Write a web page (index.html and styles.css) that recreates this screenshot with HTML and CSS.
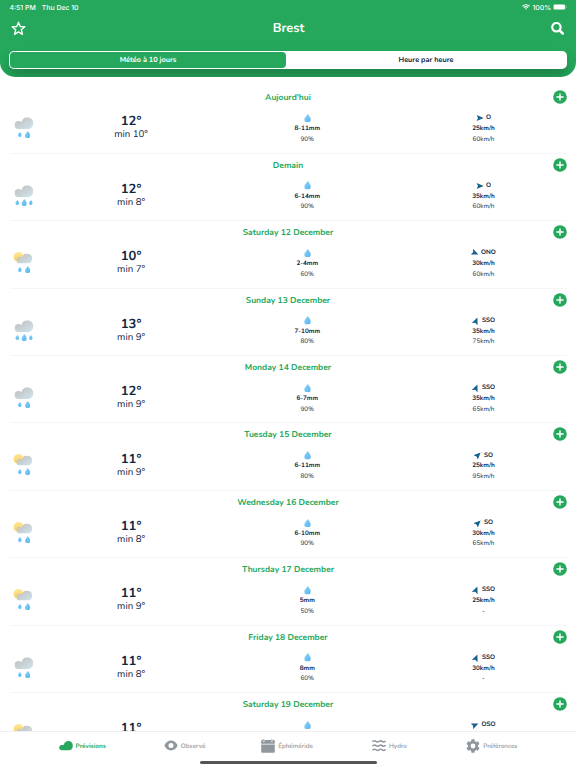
FILE: index.html
```html
<!DOCTYPE html>
<html lang="fr">
<head>
    <meta charset="UTF-8">
    <meta name="viewport" content="width=device-width, initial-scale=1.0">
    <title>Brest</title>
    <link rel="stylesheet" href="styles.css">
</head>
<body>
    <svg width="0" height="0" class="defs">
        <defs>
            <linearGradient id="cloudFill" x1="0" y1="0" x2="1" y2="1">
                <stop offset="0.3" stop-color="#c5c8c9"/>
                <stop offset="1" stop-color="#cfe6ef"/>
            </linearGradient>
            <linearGradient id="sunFill" x1="0" y1="0" x2="0" y2="1">
                <stop offset="0" stop-color="#fee69a"/>
                <stop offset="1" stop-color="#fbcf55"/>
            </linearGradient>
            <linearGradient id="dropFill" x1="0" y1="0" x2="1" y2="1">
                <stop offset="0.2" stop-color="#85cdf5"/>
                <stop offset="1" stop-color="#4fb5f0"/>
            </linearGradient>
            <symbol id="cloud" viewBox="0 0 19 12">
                <path d="M4.2 12A4.1 4.1 0 0 1 4.2 3.8C5.3 3.8 6.2 4.1 7 4.7A6 6 0 1 1 13 12Z" fill="url(#cloudFill)"/>
            </symbol>
            <symbol id="drop" viewBox="0 0 8 10">
                <path d="M4.4 0C5.4 1.7 7.7 3.9 7.7 6.3A3.7 3.7 0 0 1 .3 6.3C.3 3.9 3.2 2.2 4.4 0Z" fill="url(#dropFill)"/>
            </symbol>
            <symbol id="arrow" viewBox="-4 -4 8 8">
                <path d="M3.7 0L-3.4 3.1L-2 0L-3.4-3.1Z" fill="#14608f"/>
            </symbol>
        </defs>
    </svg>

    <header class="header">
        <div class="status">
            <div class="status-left"><span>4:51 PM</span><span>Thu Dec 10</span></div>
            <div class="status-right">
                <svg width="8" height="6" viewBox="0 0 16 12" fill="none" stroke="#fff" stroke-width="2.2">
                    <path d="M1 4.5A10 10 0 0 1 15 4.5M3.7 7.4A6.2 6.2 0 0 1 12.3 7.4"/>
                    <path d="M8 11.5L5.8 9.4A3.2 3.2 0 0 1 10.2 9.4Z" fill="#fff" stroke="none"/>
                </svg>
                <span>100%</span>
                <svg width="14" height="6" viewBox="0 0 14 6">
                    <rect x=".25" y=".25" width="12.2" height="5.5" rx="1.5" fill="#8fd4aa"/>
                    <rect x=".9" y=".8" width="10.9" height="4.4" rx="1" fill="#fff"/>
                    <path d="M13 2V4Q13.8 3.7 13.8 3T13 2Z" fill="#8fd4aa"/>
                </svg>
            </div>
        </div>
        <div class="navbar">
            <svg width="15" height="15" viewBox="0 0 14 14">
                <path d="M7 1.2L8.6 5.1L12.9 5.4L9.6 8.2L10.7 12.5L7 10.2L3.3 12.5L4.4 8.2L1.1 5.4L5.4 5.1Z" fill="none" stroke="#fff" stroke-width="1.25" stroke-linejoin="round"/>
            </svg>
            <h1 class="title">Brest</h1>
            <svg width="13" height="13" viewBox="0 0 13 13" fill="none" stroke="#fff">
                <circle cx="5.4" cy="5.2" r="4.2" stroke-width="2.2"/>
                <path d="M8.6 8.4L11.7 11.5" stroke-width="2.5" stroke-linecap="round"/>
            </svg>
        </div>
        <div class="segments">
            <div class="segment active">Météo à 10 jours</div>
            <div class="segment">Heure par heure</div>
        </div>
    </header>

    <main class="days" id="days"></main>

    <footer class="footer">
        <nav class="tabs">
            <a class="tab active">
                <svg width="14" height="14" viewBox="0 0 14 14"><path d="M3 11.3Q.2 11.3.2 8.6Q.3 6 3.3 6.1Q4.2 6.2 4.8 5.7C5.6 3.4 7.1 2.1 9.4 2.1C12.1 2.1 13.8 4 13.8 6.5Q13.8 11.3 9.5 11.3Z" fill="currentColor"/></svg>
                <span>Prévisions</span>
            </a>
            <a class="tab">
                <svg width="14" height="14" viewBox="0 0 14 14"><path fill-rule="evenodd" d="M.3 6.5C2 3.3 4.2 1.6 7 1.6S12 3.3 13.7 6.5C12 9.8 9.8 11.4 7 11.4S2 9.8.3 6.5ZM7 4A2.5 2.5 0 1 0 7 9A2.5 2.5 0 1 0 7 4Z" fill="currentColor"/></svg>
                <span>Observé</span>
            </a>
            <a class="tab">
                <svg width="14" height="14" viewBox="0 0 14 14" fill="currentColor"><path d="M.2 4.7V1.8Q.2 1.1 1 1.1H2V2.7H3.5V1.1H4L10 1.1V2.7H11.6V1.1H13Q13.8 1.1 13.8 1.8V4.7Z"/><path d="M.2 5.5H13.8V12.5Q13.8 13.7 12.6 13.7H1.4Q.2 13.7.2 12.5Z"/><path d="M2.3 0H3.2V2.2H2.3ZM10.4 0H11.3V2.2H10.4Z"/></svg>
                <span>Éphéméride</span>
            </a>
            <a class="tab">
                <svg width="14" height="14" viewBox="0 0 14 14" fill="none" stroke="currentColor" stroke-width="1.5" stroke-linecap="round"><path d="M.9 2.4Q2.6 1.2 4 2.4T7.2 2.4T10.2 2.4T13.1 2.4M.9 6.6Q2.6 5.4 4 6.6T7.2 6.6T10.2 6.6T13.1 6.6M.9 10.8Q2.6 9.6 4 10.8T7.2 10.8T10.2 10.8T13.1 10.8"/></svg>
                <span>Hydro</span>
            </a>
            <a class="tab">
                <svg width="14" height="14" viewBox="0 0 14 14"><path fill-rule="evenodd" d="M5.5.3H8.5L8.9 2.2L10.2 3L12 2.3L13.5 4.9L12 6.2V7.8L13.5 9.1L12 11.7L10.2 11L8.9 11.8L8.5 13.7H5.5L5.1 11.8L3.8 11L2 11.7L.5 9.1L2 7.8V6.2L.5 4.9L2 2.3L3.8 3L5.1 2.2ZM7 4.6A2.4 2.4 0 1 0 7 9.4A2.4 2.4 0 1 0 7 4.6Z" fill="currentColor"/></svg>
                <span>Préférences</span>
            </a>
        </nav>
        <div class="home-bar"></div>
    </footer>

    <script>
        // day, icon, max, min, rain, probability, wind direction, wind, gusts
        const days = [
            ["Aujourd'hui", 'rain', 12, 10, '8-11mm', 90, 'O', 25, '60km/h'],
            ['Demain', 'showers', 12, 8, '6-14mm', 90, 'O', 35, '60km/h'],
            ['Saturday 12 December', 'sun', 10, 7, '2-4mm', 60, 'ONO', 30, '60km/h'],
            ['Sunday 13 December', 'showers', 13, 9, '7-10mm', 80, 'SSO', 35, '75km/h'],
            ['Monday 14 December', 'rain', 12, 9, '6-7mm', 90, 'SSO', 35, '65km/h'],
            ['Tuesday 15 December', 'sun', 11, 9, '6-11mm', 80, 'SO', 25, '95km/h'],
            ['Wednesday 16 December', 'sun', 11, 8, '6-10mm', 90, 'SO', 30, '65km/h'],
            ['Thursday 17 December', 'sun', 11, 9, '5mm', 50, 'SSO', 25, '-'],
            ['Friday 18 December', 'rain', 11, 8, '8mm', 60, 'SSO', 30, '-']
        ];

        // last day only shows its first line above the tab bar
        const lastDay = ['Saturday 19 December', 'sun', 11, null, null, null, 'OSO', null, null];

        const angles = { O: 0, ONO: 22.5, OSO: -22.5, SO: -45, SSO: -67.5 };

        const small = x => `<use href="#drop" x="${x}" y="14.9" width="4" height="5"/>`;
        const large = x => `<use href="#drop" x="${x}" y="14" width="5.6" height="7"/>`;
        const bigCloud = '<use href="#cloud" x="0.5" y="0.2" width="19" height="12"/>';

        const icons = {
            rain: bigCloud + small(3.8) + large(10.8),
            showers: bigCloud + small(1.2) + large(7.3) + small(14.8),
            sun: '<circle cx="4.6" cy="5" r="5" fill="url(#sunFill)"/><use href="#cloud" x="2.4" y="1.6" width="15.8" height="10"/>' + small(3.8) + large(10.8)
        };

        const line = (tag, value, text) => value === null ? '' : `<${tag}>${text}</${tag}>`;

        document.getElementById('days').innerHTML = [...days, lastDay].map(d => `
            <section class="day">
                <div class="day-head">
                    <h2 class="day-name">${d[0]}</h2>
                    <svg class="plus" width="14" height="14" viewBox="0 0 14 14"><circle cx="7" cy="7" r="6.8" fill="#25a85b"/><path d="M7 3.9V10.1M3.9 7H10.1" stroke="#fff" stroke-width="1.4" stroke-linecap="round"/></svg>
                </div>
                <div class="day-body">
                    <svg class="weather" width="20" height="22" viewBox="0 0 20 22" overflow="visible">${icons[d[1]]}</svg>
                    <div class="col temp">
                        <strong>${d[2]}°</strong>
                        ${line('span', d[3], `min ${d[3]}°`)}
                    </div>
                    <div class="col">
                        <div class="top"><svg width="7" height="8.6"><use href="#drop"/></svg></div>
                        ${line('strong', d[4], d[4])}
                        ${line('span', d[5], `${d[5]}%`)}
                    </div>
                    <div class="col">
                        <div class="top"><svg width="8" height="8" viewBox="-4 -4 8 8"><g transform="rotate(${angles[d[6]]})"><use href="#arrow" x="-4" y="-4" width="8" height="8"/></g></svg><span class="dir">${d[6]}</span></div>
                        ${line('strong', d[7], `${d[7]}km/h`)}
                        ${line('span', d[8], d[8])}
                    </div>
                </div>
            </section>`).join('');
    </script>
</body>
</html>
```

FILE: styles.css
```css
* {
    margin: 0;
    padding: 0;
    box-sizing: border-box;
}

body {
    font-family: Nunito, 'Open Sans', 'Noto Sans', sans-serif;
    text-rendering: geometricPrecision;
    height: 768px;
    display: flex;
    flex-direction: column;
    overflow: hidden;
    background: #fff;
    color: #10253f;
}

svg {
    flex: none;
    display: block;
}

.defs {
    position: absolute;
}

.header {
    height: 77px;
    flex: none;
    background: #25a85b;
    border-radius: 0 0 15px 15px;
    color: #fff;
    overflow: hidden;
}

.status {
    height: 14px;
    display: flex;
    justify-content: space-between;
    align-items: center;
    padding: 0 9px 0 9.5px;
    font-family: Inter, sans-serif;
    font-size: 6.9px;
    font-weight: 500;
}

.status-left {
    display: flex;
    gap: 6px;
}

.status-right {
    display: flex;
    align-items: center;
    gap: 2px;
}

.navbar {
    height: 37px;
    display: flex;
    justify-content: space-between;
    align-items: center;
    padding: 0 12px 9px 11px;
}

.title {
    font-size: 12.8px;
    font-weight: 700;
    line-height: 16px;
}

.segments {
    height: 18px;
    margin: 0 9px;
    display: flex;
    padding: 1px;
    background: #fff;
    border-radius: 5px;
    box-shadow: 0 8px 12px rgba(0, 0, 0, 0.22);
}

.segment {
    flex: 1;
    display: flex;
    align-items: center;
    justify-content: center;
    font-size: 7.3px;
    font-weight: 700;
    color: #10253f;
    border-radius: 4px;
}

.segment.active {
    flex: 0 0 276px;
    background: #25a85b;
    color: #fff;
}

.days {
    flex: 1;
    min-height: 0;
    overflow: hidden;
    padding: 9.2px 9.5px 0;
}

.day {
    height: 67.45px;
    border-bottom: 1px solid #f4f5f5;
}

.day-head {
    height: 23px;
    display: grid;
    grid-template-columns: 14px 1fr 14px;
    align-items: center;
}

.day-name {
    grid-column: 2;
    padding-top: 1.2px;
    text-align: center;
    font-size: 8.5px;
    line-height: 12px;
    font-weight: 700;
    color: #25a85b;
}

.plus {
    margin-top: -0.8px;
}

.day-body {
    display: flex;
    padding-left: 4.5px;
    margin-right: -5px;
}

.weather {
    margin: 8px 9px 0 0;
}

.col {
    flex: 1;
    display: flex;
    flex-direction: column;
    align-items: center;
    padding-top: 3px;
    font-size: 6.4px;
    line-height: 10.6px;
}

.top {
    height: 12px;
    display: flex;
    align-items: center;
    gap: 2px;
    font-weight: 700;
}

.dir {
    padding-top: 1px;
}

.temp {
    padding-top: 6.2px;
    font-size: 9.7px;
    line-height: 13px;
}

.temp strong {
    font-size: 13px;
}

.footer {
    height: 37.5px;
    flex: none;
    border-top: 1.5px solid #eeefef;
    background: #fff;
}

.tabs {
    height: 29.5px;
    display: flex;
    padding: 0 33px 0 31px;
}

.tab {
    flex: 1;
    display: flex;
    align-items: center;
    justify-content: center;
    gap: 3px;
    font-size: 6.4px;
    font-weight: 600;
    color: #90979d;
}

.tab span {
    padding-top: 1.4px;
}

.tab.active {
    color: #25a85b;
    font-weight: 700;
}

.home-bar {
    width: 177px;
    height: 3px;
    margin: 0 auto;
    border-radius: 2px;
    background: #555;
}
```
